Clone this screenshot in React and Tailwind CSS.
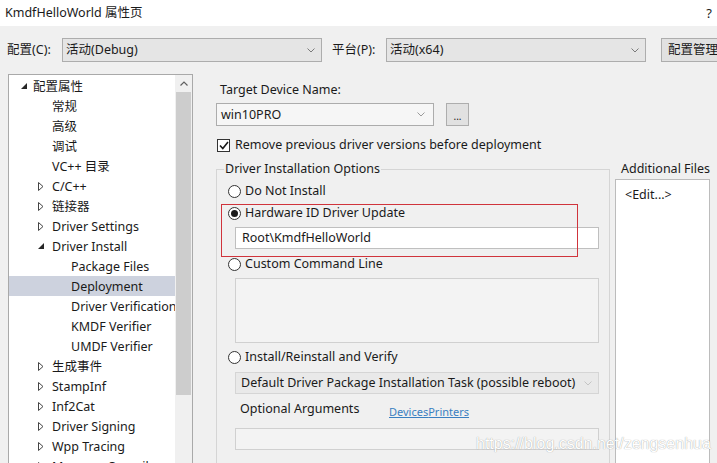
import React from "react";

const Chevron = ({ color = "#7a7a7a" }) => (
  <svg width="8" height="5" viewBox="0 0 8 5">
    <path d="M0.5 0.5 L4 4 L7.5 0.5" fill="none" stroke={color} strokeWidth="1" />
  </svg>
);

const Expanded = () => (
  <svg width="6" height="6" viewBox="0 0 6 6">
    <path d="M6 0 L6 6 L0 6 Z" fill="#262626" />
  </svg>
);

const Collapsed = () => (
  <svg width="6" height="9" viewBox="0 0 6 9">
    <path d="M0.5 0.5 L5 4.5 L0.5 8.5 Z" fill="none" stroke="#444" strokeWidth="1" />
  </svg>
);

const Radio = ({ checked }) => (
  <span className="flex h-[13px] w-[13px] shrink-0 items-center justify-center rounded-full border border-[#333] bg-white">
    {checked && <span className="h-[7px] w-[7px] rounded-full bg-[#1a1a1a]" />}
  </span>
);

const tree = [
  { label: "配置属性", level: 0, icon: "exp" },
  { label: "常规", level: 1 },
  { label: "高级", level: 1 },
  { label: "调试", level: 1 },
  { label: "VC++ 目录", level: 1 },
  { label: "C/C++", level: 1, icon: "col" },
  { label: "链接器", level: 1, icon: "col" },
  { label: "Driver Settings", level: 1, icon: "col" },
  { label: "Driver Install", level: 1, icon: "exp" },
  { label: "Package Files", level: 2 },
  { label: "Deployment", level: 2, selected: true },
  { label: "Driver Verification", level: 2 },
  { label: "KMDF Verifier", level: 2 },
  { label: "UMDF Verifier", level: 2 },
  { label: "生成事件", level: 1, icon: "col" },
  { label: "StampInf", level: 1, icon: "col" },
  { label: "Inf2Cat", level: 1, icon: "col" },
  { label: "Driver Signing", level: 1, icon: "col" },
  { label: "Wpp Tracing", level: 1, icon: "col" },
  { label: "Message Compiler", level: 1, icon: "col" },
];

function TreeRow({ item }) {
  const pad = item.level === 0 ? "pl-[12px]" : item.level === 1 ? "pl-[29px]" : "pl-[62px]";
  const slot = item.level === 0 ? "w-[12px]" : "w-[14px]";
  return (
    <div
      className={`flex h-[20px] shrink-0 items-center whitespace-nowrap ${pad} ${
        item.selected ? "bg-[#cdd2de]" : ""
      }`}
    >
      {item.level < 2 && (
        <span className={`flex ${slot} shrink-0 items-center`}>
          {item.icon === "exp" && <Expanded />}
          {item.icon === "col" && <Collapsed />}
        </span>
      )}
      <span className="pt-[1px]">{item.label}</span>
    </div>
  );
}

export default function App() {
  return (
    <div className="relative h-[463px] w-[717px] overflow-hidden bg-[#f0f0f0] font-['Noto_Sans','Noto_Sans_CJK_SC',sans-serif] text-[12.5px] leading-[20px] text-[#1a1a1a]">
      {/* Title bar */}
      <div className="flex h-[26px] items-center justify-between bg-white pl-[5px] pr-[5px] text-[12.5px]">
        <span>KmdfHelloWorld 属性页</span>
        <span className="text-[13px]">?</span>
      </div>

      {/* Config row */}
      <div className="mt-[12px] flex h-[24px] items-center whitespace-nowrap">
        <span className="ml-[7px] w-[55px] shrink-0">配置(C):</span>
        <div className="flex h-[24px] w-[260px] shrink-0 items-center justify-between border border-[#adadad] bg-[#e5e5e5] pl-[3px] pr-[6px]">
          <span>活动(Debug)</span>
          <Chevron />
        </div>
        <span className="ml-[10px] w-[54px] shrink-0">平台(P):</span>
        <div className="flex h-[24px] w-[260px] shrink-0 items-center justify-between border border-[#adadad] bg-[#e5e5e5] pl-[3px] pr-[6px]">
          <span>活动(x64)</span>
          <Chevron />
        </div>
        <div className="ml-[15px] flex h-[24px] w-[80px] shrink-0 items-center border border-[#adadad] bg-[#e1e1e1] pl-[6px]">
          配置管理器
        </div>
      </div>

      {/* Main */}
      <div className="mt-[12px] flex">
        {/* Tree */}
        <div className="ml-[8px] flex h-[400px] w-[185px] shrink-0 border border-[#a9a9a9] bg-white">
          <div className="flex min-w-0 flex-1 flex-col overflow-hidden pt-[1px]">
            {tree.map((t) => (
              <TreeRow key={t.label} item={t} />
            ))}
          </div>
          <div className="flex w-[17px] shrink-0 flex-col items-center bg-[#f0f0f0]">
            <div className="flex h-[17px] items-center justify-center">
              <svg width="8" height="5" viewBox="0 0 8 5">
                <path d="M0.5 4.5 L4 1 L7.5 4.5" fill="none" stroke="#606060" strokeWidth="1.2" />
              </svg>
            </div>
            <div className="h-[303px] w-[15px] bg-[#cdcdcd]" />
          </div>
        </div>

        {/* Right content */}
        <div className="ml-[23px] flex flex-col">
          <div className="mt-[5px] h-[20px] pl-[4px] pt-[1px]">Target Device Name:</div>
          <div className="mt-[4px] flex h-[23px] items-center">
            <div className="flex h-[23px] w-[218px] items-center justify-between border border-[#acacac] bg-[#f6f6f6] pl-[4px] pr-[8px]">
              <span>win10PRO</span>
              <Chevron color="#9a9a9a" />
            </div>
            <div className="ml-[12px] flex h-[23px] w-[23px] items-end justify-center border border-[#adadad] bg-[#e1e1e1] pb-[4px] text-[10px] leading-[10px]">
              ...
            </div>
          </div>
          <div className="mt-[9px] flex h-[20px] items-center whitespace-nowrap pl-[1px]">
            <span className="flex h-[13px] w-[13px] items-center justify-center border border-[#333] bg-white">
              <svg width="10" height="9" viewBox="0 0 10 9">
                <path d="M1 4.5 L3.8 7.5 L9 1" fill="none" stroke="#1a1a1a" strokeWidth="1.6" />
              </svg>
            </span>
            <span className="ml-[5px]">Remove previous driver versions before deployment</span>
          </div>

          <div className="mt-[4px] flex">
            <fieldset className="h-[320px] w-[394px] shrink-0 border border-[#d5d5d5] pl-[11px]">
              <legend className="ml-[-4px] whitespace-nowrap px-[1px]">Driver Installation Options</legend>
              <div className="mt-[2px] flex h-[20px] items-center">
                <Radio />
                <span className="ml-[4px]">Do Not Install</span>
              </div>
              <div className="mt-[2px] flex h-[20px] items-center">
                <Radio checked />
                <span className="ml-[4px]">Hardware ID Driver Update</span>
              </div>
              <div className="ml-[7px] mt-[4px] flex h-[22px] w-[364px] items-center border border-[#bfbfbf] bg-white pl-[6px]">
                Root\KmdfHelloWorld
              </div>
              <div className="mt-[5px] flex h-[20px] items-center">
                <Radio />
                <span className="ml-[4px]">Custom Command Line</span>
              </div>
              <div className="ml-[7px] mt-[4px] h-[65px] w-[364px] border border-[#d0d0d0] bg-[#f3f3f3]" />
              <div className="mt-[4px] flex h-[20px] items-center">
                <Radio />
                <span className="ml-[4px]">Install/Reinstall and Verify</span>
              </div>
              <div className="ml-[7px] mt-[5px] flex h-[22px] w-[364px] items-center justify-between whitespace-nowrap border border-[#d5d5d5] bg-[#e9e9e9] pl-[5px] pr-[6px]">
                <span>Default Driver Package Installation Task (possible reboot)</span>
                <Chevron color="#c4c4c4" />
              </div>
              <div className="ml-[12px] mt-[5px] flex h-[20px] items-center whitespace-nowrap">
                <span className="w-[149px] shrink-0">Optional Arguments</span>
                <span className="mt-[5px] text-[11px] leading-[14px] text-[#3a7fc1] underline">Devices</span>
                <span className="mt-[5px] text-[11px] leading-[14px] text-[#3a7fc1] underline">Printers</span>
              </div>
              <div className="ml-[7px] mt-[9px] h-[22px] w-[364px] border border-[#d0d0d0] bg-[#f3f3f3]" />
            </fieldset>

            <div className="ml-[5px] flex flex-1 flex-col">
              <div className="h-[20px] whitespace-nowrap pl-[6px]">Additional Files</div>
              <div className="h-[300px] border border-[#bcbcbc] bg-white pl-[9px] pt-[5px]">
                &lt;Edit...&gt;
              </div>
            </div>
          </div>
        </div>
      </div>

      {/* Annotation overlay */}
      <div className="absolute left-[221px] top-[204px] h-[53px] w-[357px] border border-[#d0343c]" />

      {/* Watermark */}
      <div className="absolute left-[476px] top-[434px] whitespace-nowrap font-['Liberation_Sans',sans-serif] text-[16px] leading-[20px] text-white [text-shadow:0_0_1px_#8a8a8a]">
        https://blog.csdn.net/zengsenhua
      </div>
    </div>
  );
}
